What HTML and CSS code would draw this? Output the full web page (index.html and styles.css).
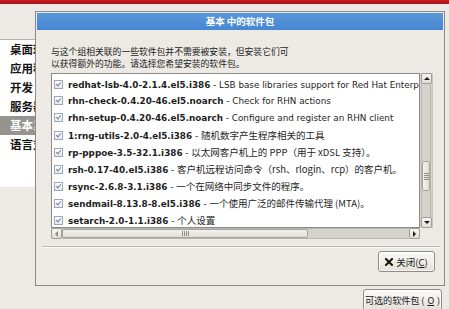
FILE: index.html
```html
<!DOCTYPE html>
<html lang="zh-CN">
<head>
<meta charset="utf-8">
<title>基本 中的软件包</title>
<link rel="stylesheet" href="styles.css">
</head>
<body>
<div class="app">
  <div class="banner"></div>
  <div class="workspace">
    <ul class="groups">
      <li>桌面环境</li>
      <li>应用程序</li>
      <li>开发</li>
      <li>服务器</li>
      <li class="selected">基本系统</li>
      <li>语言支持</li>
    </ul>
  </div>
  <div class="app-actions">
    <button class="btn btn-optional">可选的软件包 (<u>O</u>)</button>
  </div>
</div>

<div class="dialog">
  <div class="titlebar">基本 中的软件包</div>
  <div class="dialog-body">
    <p class="intro">与这个组相关联的一些软件包并不需要被安装，但安装它们可<br>以获得额外的功能。请选择您希望安装的软件包。</p>
    <div class="scroller">
      <div class="viewport">
        <ul class="packages">
          <li><span class="check"></span><b>redhat-lsb-4.0-2.1.4.el5.i386</b> - LSB base libraries support for Red Hat Enterprise Linux</li>
          <li><span class="check"></span><b>rhn-check-0.4.20-46.el5.noarch</b> - Check for RHN actions</li>
          <li><span class="check"></span><b>rhn-setup-0.4.20-46.el5.noarch</b> - Configure and register an RHN client</li>
          <li><span class="check"></span><b>1:rng-utils-2.0-4.el5.i386</b> - <span class="zh">随机数字产生程序相关的工具</span></li>
          <li><span class="check"></span><b>rp-pppoe-3.5-32.1.i386</b> - <span class="zh">以太网客户机上的 PPP（用于 xDSL 支持）。</span></li>
          <li><span class="check"></span><b>rsh-0.17-40.el5.i386</b> - <span class="zh">客户机远程访问命令（rsh、rlogin、rcp）的客户机。</span></li>
          <li><span class="check"></span><b>rsync-2.6.8-3.1.i386</b> - <span class="zh">一个在网络中同步文件的程序。</span></li>
          <li><span class="check"></span><b>sendmail-8.13.8-8.el5.i386</b> - <span class="zh">一个使用广泛的邮件传输代理 (MTA)。</span></li>
          <li><span class="check"></span><b>setarch-2.0-1.1.i386</b> - <span class="zh">个人设置</span></li>
        </ul>
      </div>
      <div class="vscroll">
        <div class="sb-btn up"></div>
        <div class="vtrough"><div class="vthumb"><span class="grip-h"></span></div></div>
        <div class="sb-btn down"></div>
      </div>
      <div class="hscroll">
        <div class="sb-btn left"></div>
        <div class="htrough"><div class="hthumb"><span class="grip-v"></span></div></div>
        <div class="sb-btn right"></div>
      </div>
      <div class="corner"></div>
    </div>
    <div class="separator"></div>
    <div class="dialog-actions">
      <button class="btn btn-close">
        <svg class="x-icon" width="8" height="8" viewBox="0 0 8 8" aria-hidden="true"><path d="M1 1 L7 7 M7 1 L1 7" stroke="#111" stroke-width="2" stroke-linecap="square"/></svg>
        <span>关闭(<u>C</u>)</span>
      </button>
    </div>
  </div>
</div>
</body>
</html>
```

FILE: styles.css
```css
* { box-sizing: border-box; }

html, body {
  margin: 0;
  padding: 0;
}

body {
  width: 449px;
  height: 309px;
  overflow: hidden;
  position: relative;
  background: #edeae5;
  color: #1c1c1c;
  font-family: "DejaVu Sans", "Noto Sans CJK SC", sans-serif;
}

/* ---------- background window ---------- */
.banner {
  height: 4px;
  background: linear-gradient(#cc1c22, #a3111a);
}

.workspace {
  margin-top: 35px;
}

.groups {
  list-style: none;
  margin: 0;
  padding: 0;
  width: 220px;
  height: 148px;
  background: #ffffff;
  border-top: 1px solid #b4b0aa;
  font-family: "Noto Sans CJK SC", sans-serif;
  font-weight: 700;
  font-size: 11.5px;
  color: #141414;
}

.groups li {
  height: 19px;
  line-height: 19px;
  padding-left: 10px;
}

.groups li.selected {
  background: #97948f;
  color: #ffffff;
}

.app-actions {
  display: flex;
  justify-content: flex-end;
  margin-top: 102px;
  padding-right: 7px;
}

/* ---------- buttons ---------- */
.btn {
  display: flex;
  align-items: center;
  justify-content: center;
  gap: 3px;
  padding: 0;
  border: 1px solid #8f8b86;
  border-radius: 3px;
  background: linear-gradient(#fbfaf8, #e4e0da);
  box-shadow: inset 0 0 0 1px rgba(255,255,255,0.7);
  font-family: "Noto Sans CJK SC", sans-serif;
  font-size: 9.5px;
  color: #1a1a1a;
  white-space: nowrap;
}

.btn u { text-decoration-thickness: 1px; text-underline-offset: 1px; }

.btn-optional {
  width: 79px;
  height: 22px;
  font-size: 9.2px;
  letter-spacing: -0.1px;
}

.btn-close {
  width: 57px;
  height: 21px;
}

.x-icon { display: block; }

/* ---------- dialog ---------- */
.dialog {
  position: absolute;
  left: 35px;
  top: 11px;
  width: 410px;
  height: 275px;
  border: 1px solid #8d8984;
  padding: 1px;
  background: #edeae5;
  display: flex;
  flex-direction: column;
}

.titlebar {
  height: 17px;
  line-height: 17px;
  background: linear-gradient(#5a98dc, #4787d2);
  color: #ffffff;
  text-align: center;
  font-family: "Noto Sans CJK SC", sans-serif;
  font-weight: 700;
  font-size: 9.5px;
}

.dialog-body {
  padding: 16px 9px 0 14px;
  display: flex;
  flex-direction: column;
}

.intro {
  margin: 0;
  font-family: "Noto Sans CJK SC", sans-serif;
  font-size: 8.8px;
  line-height: 12px;
  color: #1c1c1c;
}

.scroller {
  margin-top: 3px;
  display: grid;
  grid-template-columns: 369px 13px;
  grid-template-rows: 155px 11px;
}

.viewport {
  background: #ffffff;
  border: 1px solid #8e8a85;
  overflow: hidden;
}

.packages {
  list-style: none;
  margin: 0;
  padding: 2.5px 0 0 0;
  font-size: 8.8px;
  color: #1e1e1e;
}

.packages li {
  height: 16.9px;
  line-height: 16.9px;
  white-space: nowrap;
  overflow: hidden;
}

.packages b { font-weight: 700; }

.packages .zh {
  font-family: "Noto Sans CJK SC", sans-serif;
  font-size: 9.5px;
}

.check {
  display: inline-block;
  vertical-align: middle;
  position: relative;
  top: -1px;
  width: 9px;
  height: 9px;
  margin: 0 5px 0 2px;
  border: 1px solid #9ea7b7;
  background: linear-gradient(#ffffff, #e6e9ee);
}

.check::after {
  content: "";
  position: absolute;
  left: 2px;
  top: 0px;
  width: 2px;
  height: 4px;
  border-right: 1.5px solid #6e84a6;
  border-bottom: 1.5px solid #6e84a6;
  transform: rotate(40deg);
}

/* scrollbars */
.vscroll {
  display: flex;
  flex-direction: column;
  padding: 0 1px 0 1px;
  background: #d6d2cc;
  border-right: 1px solid #c9c5bf;
}

.vtrough {
  flex: 1;
  display: flex;
  flex-direction: column;
  border-left: 1px solid #b9b5af;
  border-right: 1px solid #b9b5af;
}

.vthumb {
  margin-top: 77px;
  height: 30px;
  background: linear-gradient(90deg, #f3f1ee, #e2ded8);
  border: 1px solid #a5a19b;
  border-radius: 2px;
  display: flex;
  align-items: center;
  justify-content: center;
}

.grip-h {
  width: 5px;
  height: 7px;
  background: repeating-linear-gradient(#8f8b86 0 1px, transparent 1px 2px);
}

.hscroll {
  display: flex;
  background: #d6d2cc;
}

.htrough {
  flex: 1;
  display: flex;
  border-top: 1px solid #b9b5af;
  border-bottom: 1px solid #b9b5af;
}

.hthumb {
  width: 246px;
  background: linear-gradient(#f3f1ee, #e2ded8);
  border: 1px solid #a5a19b;
  border-radius: 2px;
  display: flex;
  align-items: center;
  justify-content: center;
}

.grip-v {
  width: 7px;
  height: 5px;
  background: repeating-linear-gradient(90deg, #8f8b86 0 1px, transparent 1px 2px);
}

.corner { background: #edeae5; }

.sb-btn {
  flex: none;
  width: 11px;
  height: 11px;
  display: flex;
  align-items: center;
  justify-content: center;
  background: linear-gradient(#f8f7f5, #e1ddd7);
  border: 1px solid #a09c96;
  border-radius: 2px;
}

.sb-btn::before {
  content: "";
  width: 0;
  height: 0;
  border: 3px solid transparent;
}

.sb-btn.up::before { border-top-width: 0; border-bottom-color: #1e1e1e; }
.sb-btn.down::before { border-bottom-width: 0; border-top-color: #1e1e1e; }
.sb-btn.left::before { border-left-width: 0; border-right-color: #8a8a8a; }
.sb-btn.right::before { border-right-width: 0; border-left-color: #1e1e1e; }

.separator {
  margin: 7px -6px 0 -9px;
  height: 2px;
  border-top: 1px solid #bdb9b3;
  border-bottom: 1px solid #fbfaf8;
}

.dialog-actions {
  display: flex;
  justify-content: flex-end;
  margin: 3px -1px 0 0;
}
```
